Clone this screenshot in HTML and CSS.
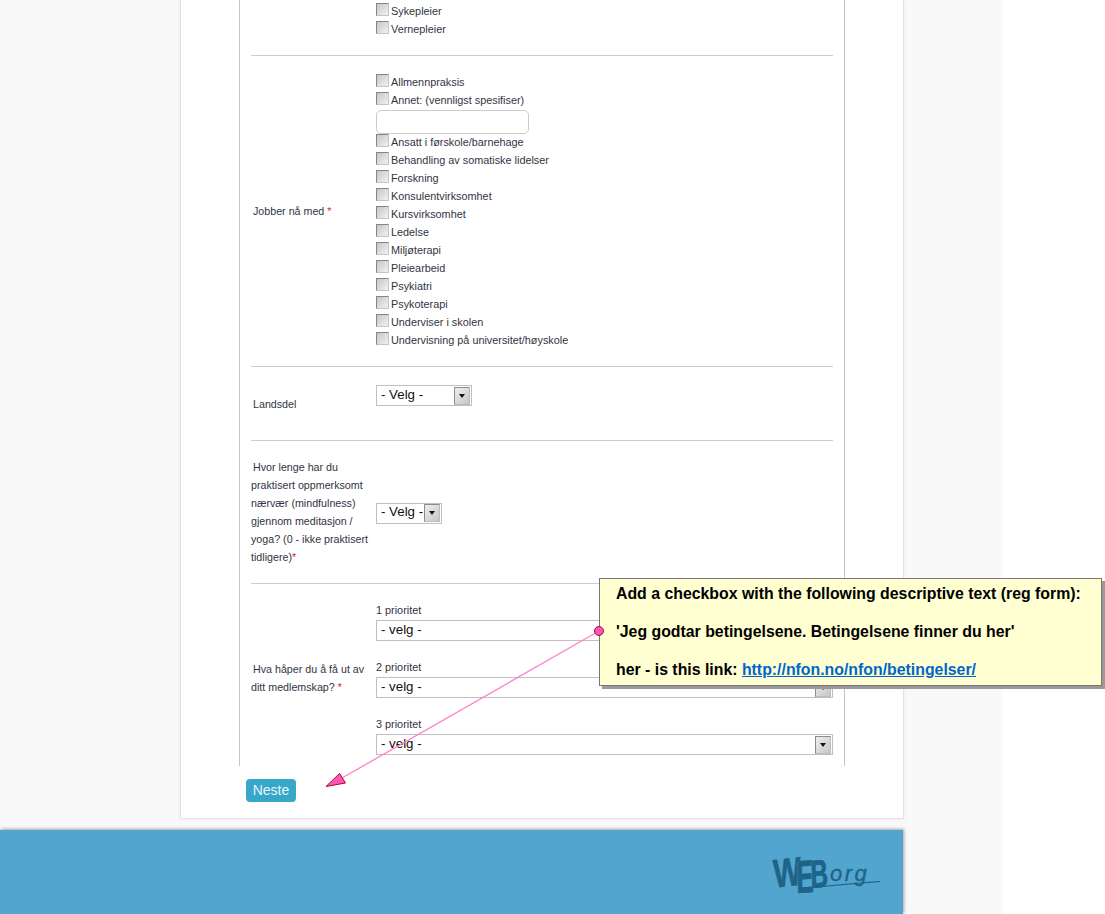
FILE: index.html
```html
<!DOCTYPE html>
<html lang="no">
<head>
<meta charset="utf-8">
<title>Registrering</title>
<link rel="stylesheet" href="styles.css">
</head>
<body>
<div class="page">
  <main class="card">
    <form class="fieldset">
      <section class="row row-first">
        <div class="label"></div>
        <div class="field">
          <div class="check"><span class="box"></span>Sykepleier</div>
          <div class="check"><span class="box"></span>Vernepleier</div>
        </div>
      </section>
      <section class="row">
        <div class="label indent">Jobber nå med <span class="req">*</span></div>
        <div class="field">
          <div class="check"><span class="box"></span>Allmennpraksis</div>
          <div class="check"><span class="box"></span>Annet: (vennligst spesifiser)</div>
          <div class="textinput"></div>
          <div class="check"><span class="box"></span>Ansatt i førskole/barnehage</div>
          <div class="check"><span class="box"></span>Behandling av somatiske lidelser</div>
          <div class="check"><span class="box"></span>Forskning</div>
          <div class="check"><span class="box"></span>Konsulentvirksomhet</div>
          <div class="check"><span class="box"></span>Kursvirksomhet</div>
          <div class="check"><span class="box"></span>Ledelse</div>
          <div class="check"><span class="box"></span>Miljøterapi</div>
          <div class="check"><span class="box"></span>Pleiearbeid</div>
          <div class="check"><span class="box"></span>Psykiatri</div>
          <div class="check"><span class="box"></span>Psykoterapi</div>
          <div class="check"><span class="box"></span>Underviser i skolen</div>
          <div class="check"><span class="box"></span>Undervisning på universitet/høyskole</div>
        </div>
      </section>
      <section class="row row-land">
        <div class="label indent">Landsdel</div>
        <div class="field">
          <div class="select select-land"><span class="val">- Velg -</span><span class="arrow"><i></i></span></div>
        </div>
      </section>
      <section class="row row-prac">
        <div class="label"><span class="first">Hvor lenge har du</span> praktisert oppmerksomt nærvær (mindfulness) gjennom meditasjon / yoga? (0 - ikke praktisert tidligere)<span class="req">*</span></div>
        <div class="field">
          <div class="select select-prac"><span class="val">- Velg -</span><span class="arrow"><i></i></span></div>
        </div>
      </section>
      <section class="row row-last">
        <div class="label"><span class="first">Hva håper du å få ut av</span> ditt medlemskap? <span class="req">*</span></div>
        <div class="field">
          <div class="prio">1 prioritet</div>
          <div class="select"><span class="val">- velg -</span><span class="arrow"><i></i></span></div>
          <div class="prio prio-gap">2 prioritet</div>
          <div class="select"><span class="val">- velg -</span><span class="arrow"><i></i></span></div>
          <div class="prio prio-gap">3 prioritet</div>
          <div class="select"><span class="val">- velg -</span><span class="arrow"><i></i></span></div>
        </div>
      </section>
    </form>
    <button class="next" type="button">Neste</button>
  </main>
  <footer class="footer">
    <div class="logo">
      <span class="l-w">W</span><span class="l-e">E</span><span class="l-b">B</span><span class="l-o">org</span>
      <svg class="l-swoosh" width="68" height="7" viewBox="0 0 68 7"><path d="M0 6.5 Q30 3.5 68 .5" fill="none" stroke="#1f6388" stroke-width="1.2"/></svg>
    </div>
  </footer>
</div>

<aside class="note">
  <p>Add a checkbox with the following descriptive text (reg form):</p>
  <p>'Jeg godtar betingelsene. Betingelsene finner du her'</p>
  <p>her - is this link: <a href="#">http://nfon.no/nfon/betingelser/</a></p>
</aside>
<svg class="arrow-overlay" width="1105" height="914" viewBox="0 0 1105 914">
  <line x1="599" y1="631" x2="342" y2="778" stroke="#ff80cc" stroke-width="1.3"/>
  <polygon points="326,786.5 339.5,773.5 345.5,783" fill="#ff55b5" stroke="#a80a2a" stroke-width="1"/>
  <circle cx="599" cy="631" r="4.5" fill="#ff55b5" stroke="#a80a2a" stroke-width="1"/>
</svg>
</body>
</html>
```
FILE: styles.css
```css
* { box-sizing: border-box; }
html, body { margin: 0; height: 914px; overflow: hidden; background: #fff; }
body { font-family: "Liberation Sans", Arial, sans-serif; position: relative; }

.page { width: 1002px; height: 914px; background: #f9f9f9; display: flex; flex-direction: column; }

.card {
  width: 724px; height: 819px; margin-left: 180px; background: #fff;
  border: 1px solid #e2e2e2; border-top: 0;
  box-shadow: 0 0 3px rgba(0,0,0,.08);
  padding-left: 58px; flex: none;
}
.fieldset {
  display: block; width: 606px; height: 766px; overflow: hidden;
  border-left: 1px solid #c4c4c4; border-right: 1px solid #c4c4c4;
  padding: 0 11px;
}
.row {
  display: grid; grid-template-columns: 125px 1fr; align-items: center;
  border-bottom: 1px solid #ccc; padding: 17px 0;
  font-size: 10.85px; line-height: 18px; color: #333344;
}
.row-first { padding-top: 2px; }
.row-last { border-bottom: 0; padding-bottom: 17px; }
.row-land { height: 74px; padding: 0; }
.row-land .select { margin-bottom: 16px; }
.label { width: 122px; font-size: 10.7px; }
.indent { padding-left: 2px; }
.first { padding-left: 2px; }
.req { color: #e8203a; }

.check { display: flex; height: 18px; white-space: nowrap; }
.box {
  width: 13px; height: 13px; margin: 1px 2px 0 0; flex: none;
  border: 1px solid #858585; border-right-color: #c4c4c4; border-bottom-color: #c4c4c4;
  background: linear-gradient(135deg, #c6c6c6, #f2f2f2);
}
.textinput { width: 153px; height: 24px; margin: 1px 0 -1px; border: 1px solid #ccc; border-radius: 5px; background: #fff; }

.select {
  display: flex; justify-content: space-between; align-items: center;
  height: 21px; padding: 0 0 0 4px; background: #fff; white-space: nowrap;
  border: 1px solid #c0c0c0; font-size: 13.3px; line-height: 18px; color: #111;
}
.val { margin-top: -2px; }
.select-land { width: 96px; }
.select-prac { width: 66px; margin-top: 2px; }
.arrow {
  width: 16px; height: 18px; margin-right: 1px; flex: none; display: flex; align-items: center; justify-content: center;
  border: 1px solid #8c8c8c; border-right-color: #bbb; border-bottom-color: #bbb;
  background: linear-gradient(135deg, #efefef, #c6c6c6);
}
.arrow i { width: 0; height: 0; border: 3.5px solid transparent; border-top: 4px solid #111; border-bottom: 0; }
.prio { height: 19px; }
.prio-gap { margin-top: 17px; height: 19px; }

.next {
  display: block; width: 50px; height: 23px; margin: 13px 0 0 7px; padding: 0;
  border: 0; border-radius: 4px; background: #37a8c9; color: #e8f6fa;
  font: 14px/23px "Liberation Sans", Arial, sans-serif;
}

.footer {
  width: 903px; height: 84px; margin-top: 11px; background: #52a5ce; flex: none;
  box-shadow: 1px -1px 3px rgba(0,0,0,.35);
  display: flex; justify-content: flex-end; padding: 26px 23px 0 0;
}
.logo { width: 109px; height: 38px; position: relative; color: #1f6388; white-space: nowrap; font-weight: 700; }
.logo span { position: absolute; display: block; line-height: 1; transform-origin: 0 0; -webkit-text-stroke: .7px #1f6388; }
.l-w { left: 1px; top: -2px; font-size: 40px; transform: scaleX(.74) rotate(-5deg); }
.l-e { left: 25px; top: -2px; font-size: 46px; transform: scaleX(.56) rotate(-2deg); text-shadow: -1px 0 #3f8db5; }
.l-b { left: 39px; top: -1px; font-size: 39px; transform: scaleX(.62) rotate(-3deg); text-shadow: -1px 0 #3f8db5; }
.logo .l-o { left: 59px; top: 7px; font-size: 22px; font-weight: 400; font-style: italic; letter-spacing: 2.5px; -webkit-text-stroke: .3px #1f6388; }
.l-swoosh { position: absolute; left: 41px; top: 25px; }

.arrow-overlay { position: absolute; left: 0; top: 0; pointer-events: none; }
.note {
  position: absolute; left: 599px; top: 578px; width: 503px; height: 108px;
  background: #ffffd2; border: 1px solid #777; box-shadow: 3px 3px 0 #9a9a9a;
  padding: 5px 0 0 16px; font-size: 15.85px; font-weight: 700; line-height: 20px; color: #000;
}
.note p { margin: 0 0 18px; white-space: nowrap; }
.note a { color: #0066cc; }
```
